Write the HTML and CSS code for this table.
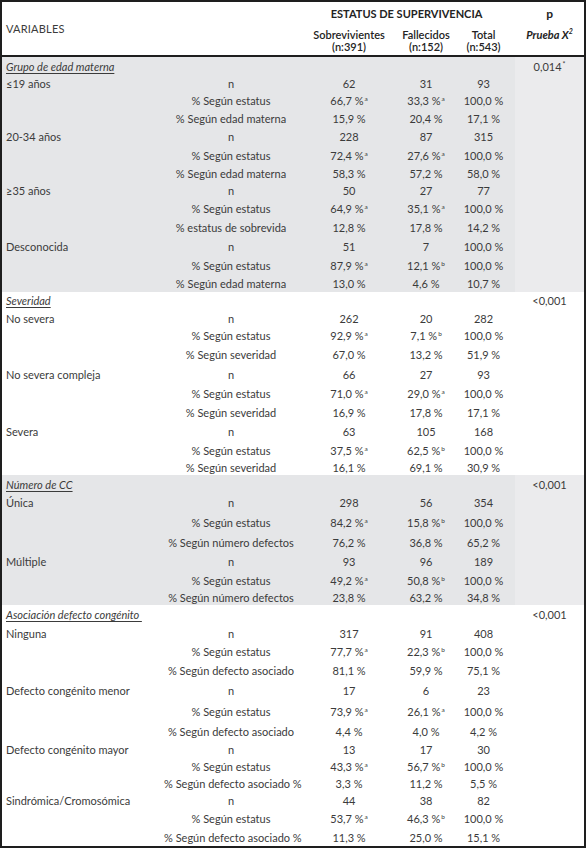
FILE: index.html
```html
<!DOCTYPE html>
<html lang="es">
<head>
<meta charset="utf-8">
<title>Estatus de supervivencia</title>
<link rel="stylesheet" href="styles.css">
</head>
<body>
<table class="tbl">
  <colgroup>
    <col class="c-var"><col class="c-stat"><col class="c-sob"><col class="c-fal"><col class="c-tot"><col class="c-p">
  </colgroup>
  <thead>
    <tr class="hr1">
      <th class="var" colspan="2" rowspan="2">VARIABLES</th>
      <th class="est" colspan="3">ESTATUS DE SUPERVIVENCIA</th>
      <th class="ph">p</th>
    </tr>
    <tr class="hr2">
      <th class="sub">Sobrevivientes<br>(n:391)</th>
      <th class="sub">Fallecidos<br>(n:152)</th>
      <th class="sub">Total<br>(n:543)</th>
      <th class="sub pr"><i>Prueba X<sup>2</sup></i></th>
    </tr>
  </thead>

  <tbody class="shade">
    <tr class="h18"><td class="grp" colspan="5"><span class="u">Grupo de edad materna</span></td><td class="p">0,014<sup class="ast">*</sup></td></tr>
    <tr class="h17"><td class="lbl">≤19 años</td><td class="st">n</td><td>62</td><td>31</td><td>93</td><td class="p"></td></tr>
    <tr class="h17"><td></td><td class="st">% Según estatus</td><td>66,7 %<sup>a</sup></td><td>33,3 %<sup>a</sup></td><td>100,0 %</td><td class="p"></td></tr>
    <tr class="h18"><td></td><td class="st">% Según edad materna</td><td>15,9 %</td><td>20,4 %</td><td>17,1 %</td><td class="p"></td></tr>
    <tr class="h19"><td class="lbl">20-34 años</td><td class="st">n</td><td>228</td><td>87</td><td>315</td><td class="p"></td></tr>
    <tr class="h18"><td></td><td class="st">% Según estatus</td><td>72,4 %<sup>a</sup></td><td>27,6 %<sup>a</sup></td><td>100,0 %</td><td class="p"></td></tr>
    <tr class="h18"><td></td><td class="st">% Según edad materna</td><td>58,3 %</td><td>57,2 %</td><td>58,0 %</td><td class="p"></td></tr>
    <tr class="h17"><td class="lbl">≥35 años</td><td class="st">n</td><td>50</td><td>27</td><td>77</td><td class="p"></td></tr>
    <tr class="h18"><td></td><td class="st">% Según estatus</td><td>64,9 %<sup>a</sup></td><td>35,1 %<sup>a</sup></td><td>100,0 %</td><td class="p"></td></tr>
    <tr class="h20"><td></td><td class="st">% estatus de sobrevida</td><td>12,8 %</td><td>17,8 %</td><td>14,2 %</td><td class="p"></td></tr>
    <tr class="h19"><td class="lbl">Desconocida</td><td class="st">n</td><td>51</td><td>7</td><td>100,0 %</td><td class="p"></td></tr>
    <tr class="h19"><td></td><td class="st">% Según estatus</td><td>87,9 %<sup>a</sup></td><td>12,1 %<sup>b</sup></td><td>100,0 %</td><td class="p"></td></tr>
    <tr class="h17"><td></td><td class="st">% Según edad materna</td><td>13,0 %</td><td>4,6 %</td><td>10,7 %</td><td class="p"></td></tr>
  </tbody>

  <tbody class="plain">
    <tr class="h17"><td class="grp" colspan="5"><span class="u">Severidad</span></td><td class="p">&lt;0,001</td></tr>
    <tr class="h18"><td class="lbl">No severa</td><td class="st">n</td><td>262</td><td>20</td><td>282</td><td class="p"></td></tr>
    <tr class="h17"><td></td><td class="st">% Según estatus</td><td>92,9 %<sup>a</sup></td><td>7,1 %<sup>b</sup></td><td>100,0 %</td><td class="p"></td></tr>
    <tr class="h20"><td></td><td class="st">% Según severidad</td><td>67,0 %</td><td>13,2 %</td><td>51,9 %</td><td class="p"></td></tr>
    <tr class="h20"><td class="lbl">No severa compleja</td><td class="st">n</td><td>66</td><td>27</td><td>93</td><td class="p"></td></tr>
    <tr class="h19"><td></td><td class="st">% Según estatus</td><td>71,0 %<sup>a</sup></td><td>29,0 %<sup>a</sup></td><td>100,0 %</td><td class="p"></td></tr>
    <tr class="h19"><td></td><td class="st">% Según severidad</td><td>16,9 %</td><td>17,8 %</td><td>17,1 %</td><td class="p"></td></tr>
    <tr class="h19"><td class="lbl">Severa</td><td class="st">n</td><td>63</td><td>105</td><td>168</td><td class="p"></td></tr>
    <tr class="h18"><td></td><td class="st">% Según estatus</td><td>37,5 %<sup>a</sup></td><td>62,5 %<sup>b</sup></td><td>100,0 %</td><td class="p"></td></tr>
    <tr class="h16"><td></td><td class="st">% Según severidad</td><td>16,1 %</td><td>69,1 %</td><td>30,9 %</td><td class="p"></td></tr>
  </tbody>

  <tbody class="shade">
    <tr class="h18"><td class="grp" colspan="5"><span class="u">Número de CC</span></td><td class="p">&lt;0,001</td></tr>
    <tr class="h19"><td class="lbl">Única</td><td class="st">n</td><td>298</td><td>56</td><td>354</td><td class="p"></td></tr>
    <tr class="h20"><td></td><td class="st">% Según estatus</td><td>84,2 %<sup>a</sup></td><td>15,8 %<sup>b</sup></td><td>100,0 %</td><td class="p"></td></tr>
    <tr class="h20"><td></td><td class="st">% Según número defectos</td><td>76,2 %</td><td>36,8 %</td><td>65,2 %</td><td class="p"></td></tr>
    <tr class="h19"><td class="lbl">Múltiple</td><td class="st">n</td><td>93</td><td>96</td><td>189</td><td class="p"></td></tr>
    <tr class="h18"><td></td><td class="st">% Según estatus</td><td>49,2 %<sup>a</sup></td><td>50,8 %<sup>b</sup></td><td>100,0 %</td><td class="p"></td></tr>
    <tr class="h16"><td></td><td class="st">% Según número defectos</td><td>23,8 %</td><td>63,2 %</td><td>34,8 %</td><td class="p"></td></tr>
  </tbody>

  <tbody class="plain">
    <tr class="h19"><td class="grp" colspan="5"><span class="u">Asociación defecto congénito&nbsp;</span></td><td class="p">&lt;0,001</td></tr>
    <tr class="h18"><td class="lbl">Ninguna</td><td class="st">n</td><td>317</td><td>91</td><td>408</td><td class="p"></td></tr>
    <tr class="h18"><td></td><td class="st">% Según estatus</td><td>77,7 %<sup>a</sup></td><td>22,3 %<sup>b</sup></td><td>100,0 %</td><td class="p"></td></tr>
    <tr class="h20"><td></td><td class="st">% Según defecto asociado</td><td>81,1 %</td><td>59,9 %</td><td>75,1 %</td><td class="p"></td></tr>
    <tr class="h21"><td class="lbl">Defecto congénito menor</td><td class="st">n</td><td>17</td><td>6</td><td>23</td><td class="p"></td></tr>
    <tr class="h21"><td></td><td class="st">% Según estatus</td><td>73,9 %<sup>a</sup></td><td>26,1 %<sup>a</sup></td><td>100,0 %</td><td class="p"></td></tr>
    <tr class="h18"><td></td><td class="st">% Según defecto asociado</td><td>4,4 %</td><td>4,0 %</td><td>4,2 %</td><td class="p"></td></tr>
    <tr class="h18"><td class="lbl">Defecto congénito mayor</td><td class="st">n</td><td>13</td><td>17</td><td>30</td><td class="p"></td></tr>
    <tr class="h17"><td></td><td class="st">% Según estatus</td><td>43,3 %<sup>a</sup></td><td>56,7 %<sup>b</sup></td><td>100,0 %</td><td class="p"></td></tr>
    <tr class="h17"><td></td><td class="st">% Según defecto asociado %</td><td>3,3 %</td><td>11,2 %</td><td>5,5 %</td><td class="p"></td></tr>
    <tr class="h17"><td class="lbl">Sindrómica/Cromosómica</td><td class="st">n</td><td>44</td><td>38</td><td>82</td><td class="p"></td></tr>
    <tr class="h19"><td></td><td class="st">% Según estatus</td><td>53,7 %<sup>a</sup></td><td>46,3 %<sup>b</sup></td><td>100,0 %</td><td class="p"></td></tr>
    <tr class="h18"><td></td><td class="st">% Según defecto asociado %</td><td>11,3 %</td><td>25,0 %</td><td>15,1 %</td><td class="p"></td></tr>
  </tbody>
</table>
</body>
</html>
```

FILE: styles.css
```css
html, body {
  margin: 0;
  padding: 0;
  background: #ffffff;
}

body {
  font-family: Lato, "Open Sans", "DejaVu Sans", sans-serif;
  font-size: 11px;
  color: #3b3b3b;
}

.tbl {
  width: 586px;
  border: 2px solid #1e1e1e;
  border-collapse: separate;
  border-spacing: 0;
  table-layout: fixed;
}

.c-var { width: 160px; }
.c-stat { width: 136px; }
.c-sob { width: 102px; }
.c-fal { width: 52px; }
.c-tot { width: 63px; }
.c-p { width: 69px; }

.tbl th,
.tbl td {
  padding: 0;
  line-height: 13px;
  text-align: center;
  vertical-align: middle;
  white-space: nowrap;
}

/* header */
.hr1 { height: 22px; }
.hr2 { height: 33px; }

.tbl th {
  color: #232323;
  font-weight: 700;
}

.tbl th.var {
  text-align: left;
  padding-left: 4px;
  font-weight: 400;
  color: #3b3b3b;
  letter-spacing: 0.2px;
  border-bottom: 2px solid #1e1e1e;
}

.tbl th.est {
  vertical-align: middle;
  padding-top: 1px;
  letter-spacing: 0;
}

.tbl th.ph {
  vertical-align: middle;
  padding-top: 1px;
  font-size: 12px;
}

.tbl th.sub {
  vertical-align: top;
  padding-top: 5px;
  line-height: 12px;
  font-weight: 600;
  border-bottom: 2px solid #1e1e1e;
}

.tbl th.pr {
  font-weight: 700;
}

.tbl th sup {
  font-size: 7px;
  line-height: 0;
  vertical-align: 5px;
}

/* body rows */
.h16 { height: 16px; }
.h17 { height: 17px; }
.h18 { height: 18px; }
.h19 { height: 19px; }
.h20 { height: 20px; }
.h21 { height: 21px; }

.shade td { background: #e5e6e8; }
.shade td.p { background: #ebebed; }

.tbl td.grp,
.tbl td.lbl {
  text-align: left;
  padding-left: 4px;
}

.tbl td.grp .u {
  font-style: italic;
  text-decoration: underline;
  text-underline-offset: 2px;
  text-decoration-thickness: 1px;
}

.tbl td.st {
  padding-left: 2px;
}

.tbl td sup {
  font-size: 6.5px;
  line-height: 0;
  vertical-align: 4px;
  margin-left: 1px;
}

.tbl td sup.ast {
  font-size: 7px;
}
```
